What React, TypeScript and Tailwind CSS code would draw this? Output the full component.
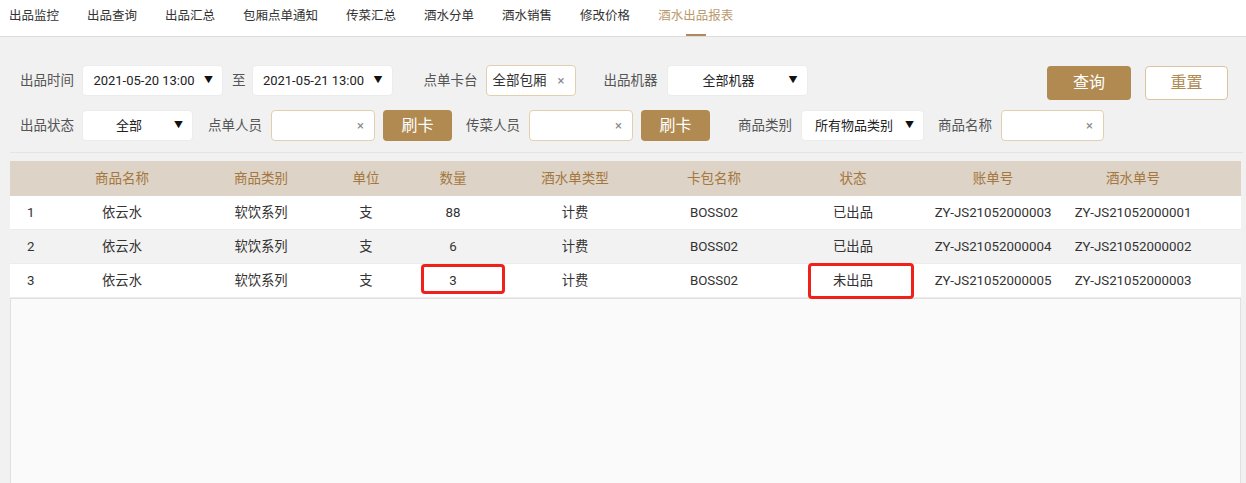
import React from 'react'

const tabs = ['出品监控', '出品查询', '出品汇总', '包厢点单通知', '传菜汇总', '酒水分单', '酒水销售', '修改价格', '酒水出品报表']

const rows = [
  { no: 1, name: '依云水', type: '软饮系列', unit: '支', qty: '88', billType: '计费', card: 'BOSS02', status: '已出品', bill: 'ZY-JS21052000003', drink: 'ZY-JS21052000001' },
  { no: 2, name: '依云水', type: '软饮系列', unit: '支', qty: '6', billType: '计费', card: 'BOSS02', status: '已出品', bill: 'ZY-JS21052000004', drink: 'ZY-JS21052000002' },
  { no: 3, name: '依云水', type: '软饮系列', unit: '支', qty: '3', billType: '计费', card: 'BOSS02', status: '未出品', bill: 'ZY-JS21052000005', drink: 'ZY-JS21052000003' },
]

const cols = 'grid grid-cols-[52px_120px_158px_52px_122px_122px_156px_122px_158px_122px_1fr]'

function Label({ children, className = '' }: { children: React.ReactNode; className?: string }) {
  return <span className={`text-[13.5px] text-[#555] whitespace-nowrap ${className}`}>{children}</span>
}

function Select({ value, className = '' }: { value: string; className?: string }) {
  return (
    <div className={`h-[31px] bg-white rounded-[4px] border border-[#ececec] flex items-center pl-[7px] pr-[9px] ${className}`}>
      <span className="flex-1 text-center text-[13px] text-[#222] whitespace-nowrap">{value}</span>
      <span className="text-[9px] text-[#111] ml-[6px]">▼</span>
    </div>
  )
}

function ClearInput({ className = '' }: { className?: string }) {
  return (
    <div className={`h-[31px] bg-white rounded-[4px] border border-[#e2cfae] flex items-center justify-end pr-[10px] ${className}`}>
      <span className="text-[13px] text-[#888]">×</span>
    </div>
  )
}

function CardButton({ className = '' }: { className?: string }) {
  return (
    <button className={`h-[31px] w-[69px] bg-[#b08a50] rounded-[4px] text-white text-[16px] ${className}`}>刷卡</button>
  )
}

export default function App() {
  return (
    <div className="w-[1246px] h-[483px] overflow-hidden bg-[#f1f1f1] flex flex-col font-['Roboto','Noto_Sans_CJK_SC',sans-serif]">
      {/* Tabs */}
      <div className="h-[37px] bg-white border-b border-[#dcdcdc] flex items-stretch pl-[9px] gap-[28px] shrink-0">
        {tabs.map((t, i) => {
          const active = i === tabs.length - 1
          return (
            <div key={t} className="relative flex items-center pb-[4px]">
              <span className={`text-[12.5px] ${active ? 'text-[#b99a6c]' : 'text-[#333]'}`}>{t}</span>
              {active && <span className="absolute bottom-[0px] left-[28px] w-[20px] h-[2px] bg-[#b08a58]" />}
            </div>
          )
        })}
      </div>

      {/* Filters */}
      <div className="pl-[20px] pt-[28px] shrink-0">
        <div className="flex items-center h-[31px]">
          <Label>出品时间</Label>
          <Select value="2021-05-20 13:00" className="ml-[8px] w-[141px]" />
          <Label className="ml-[9px]">至</Label>
          <Select value="2021-05-21 13:00" className="ml-[6px] w-[141px]" />
          <Label className="ml-[31px]">点单卡台</Label>
          <div className="ml-[8px] w-[90px] h-[31px] bg-white rounded-[4px] border border-[#e2cfae] flex items-center pl-[6px] pr-[10px]">
            <span className="flex-1 text-[13.5px] text-[#333] whitespace-nowrap">全部包厢</span>
            <span className="text-[13px] text-[#888]">×</span>
          </div>
          <Label className="ml-[28px]">出品机器</Label>
          <Select value="全部机器" className="ml-[9px] w-[141px]" />
          <div className="ml-auto mr-[18px] self-start mt-px flex gap-[14px]">
            <button className="w-[84px] h-[34px] bg-[#b08a50] rounded-[4px] text-white text-[16px]">查询</button>
            <button className="w-[83px] h-[34px] bg-white border border-[#dcc3a0] rounded-[4px] text-[#b08a53] text-[16px]">重置</button>
          </div>
        </div>

        <div className="flex items-center h-[31px] mt-[14px]">
          <Label>出品状态</Label>
          <Select value="全部" className="ml-[8px] w-[111px]" />
          <Label className="ml-[15px]">点单人员</Label>
          <ClearInput className="ml-[9px] w-[104px]" />
          <CardButton className="ml-[8px]" />
          <Label className="ml-[14px]">传菜人员</Label>
          <ClearInput className="ml-[9px] w-[104px]" />
          <CardButton className="ml-[8px]" />
          <Label className="ml-[28px]">商品类别</Label>
          <Select value="所有物品类别" className="ml-[9px] w-[123px]" />
          <Label className="ml-[14px]">商品名称</Label>
          <ClearInput className="ml-[9px] w-[103px]" />
        </div>
      </div>

      {/* Table */}
      <div className="mt-[11px] ml-[10px] mr-[3px] border-t border-[#e4e4e4] shrink-0" />
      <div className="mt-[8px] ml-[10px] mr-[5px] flex-1 flex flex-col relative">
        <div className={`${cols} h-[35px] bg-[#ddd3c6] text-[13.5px] text-[#a4773f] items-center`}>
          <div />
          <div className="text-center">商品名称</div>
          <div className="text-center">商品类别</div>
          <div className="text-center">单位</div>
          <div className="text-center">数量</div>
          <div className="text-center">酒水单类型</div>
          <div className="text-center">卡包名称</div>
          <div className="text-center">状态</div>
          <div className="text-center">账单号</div>
          <div className="text-center">酒水单号</div>
          <div />
        </div>
        {rows.map((r, i) => (
          <div
            key={r.no}
            className={`${cols} h-[34px] items-center text-[13.3px] text-[#333] border-b border-[#ececec] ${i % 2 === 1 ? 'bg-[#f2f2f2]' : 'bg-white'}`}
          >
            <div className="pl-[17px]">{r.no}</div>
            {[r.name, r.type, r.unit, r.qty, r.billType, r.card, r.status, r.bill, r.drink].map((v, j) => (
              <div key={j} className="flex justify-center whitespace-nowrap">{v}</div>
            ))}
            <div />
          </div>
        ))}
        <div className="flex-1 bg-[#fafafa] border-x border-t border-[#e0e0e0]" />

        {/* red annotation boxes */}
        <div className="absolute left-[411px] top-[103px] w-[84px] h-[30px] border-[3px] border-[#f0201a] rounded-[4px]" />
        <div className="absolute left-[798px] top-[102px] w-[106px] h-[36px] border-[3px] border-[#f0201a] rounded-[4px]" />
      </div>
    </div>
  )
}
